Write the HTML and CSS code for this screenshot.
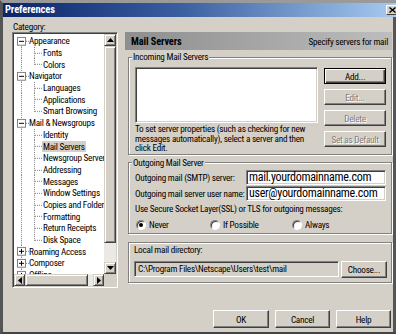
FILE: index.html
```html
<!DOCTYPE html>
<html>
<head>
<meta charset="utf-8">
<title>Preferences</title>
<link rel="stylesheet" href="styles.css">
</head>
<body>
<svg class="defs" width="0" height="0" aria-hidden="true">
  <defs>
    <symbol id="t-first" viewBox="0 0 15 12" preserveAspectRatio="none">
      <path d="M7.5 11V12M12 6.5H15" stroke="#808080" stroke-dasharray="1 1" fill="none"/>
      <rect x="3.5" y="2.5" width="8" height="8" fill="#fff" stroke="#808080"/>
      <path d="M5 6.5H10" stroke="#000"/>
    </symbol>
    <symbol id="t-open" viewBox="0 0 15 12" preserveAspectRatio="none">
      <path d="M7.5 0V2M7.5 11V12M12 6.5H15" stroke="#808080" stroke-dasharray="1 1" fill="none"/>
      <rect x="3.5" y="2.5" width="8" height="8" fill="#fff" stroke="#808080"/>
      <path d="M5 6.5H10" stroke="#000"/>
    </symbol>
    <symbol id="t-closed" viewBox="0 0 15 12" preserveAspectRatio="none">
      <path d="M7.5 0V2M7.5 11V12M12 6.5H15" stroke="#808080" stroke-dasharray="1 1" fill="none"/>
      <rect x="3.5" y="2.5" width="8" height="8" fill="#fff" stroke="#808080"/>
      <path d="M5 6.5H10M7.5 4V9" stroke="#000"/>
    </symbol>
    <symbol id="child" viewBox="0 0 29 12" preserveAspectRatio="none">
      <path d="M7.5 0V12M20.5 0V12M21 6.5H28" stroke="#808080" stroke-dasharray="1 1" fill="none"/>
    </symbol>
    <symbol id="child-last" viewBox="0 0 29 12" preserveAspectRatio="none">
      <path d="M7.5 0V12M20.5 0V7M21 6.5H28" stroke="#808080" stroke-dasharray="1 1" fill="none"/>
    </symbol>
  </defs>
</svg>

<div class="window">
  <div class="titlebar">
    <span class="title">Preferences</span>
    <span class="close"><svg width="7" height="6" viewBox="0 0 7 6"><path d="M0.5 0.5L6.5 5.5M6.5 0.5L0.5 5.5" stroke="#000" stroke-width="1.4"/></svg></span>
  </div>

  <div class="content">
    <div class="main">
      <div class="left">
        <div class="cat-label">Category:</div>
        <div class="tree">
          <div class="tree-rows">
            <div class="row top"><svg class="g"><use href="#t-first"/></svg><span>Appearance</span></div>
            <div class="row child"><svg class="g"><use href="#child"/></svg><span>Fonts</span></div>
            <div class="row child"><svg class="g"><use href="#child-last"/></svg><span>Colors</span></div>
            <div class="row top"><svg class="g"><use href="#t-open"/></svg><span>Navigator</span></div>
            <div class="row child"><svg class="g"><use href="#child"/></svg><span>Languages</span></div>
            <div class="row child"><svg class="g"><use href="#child"/></svg><span>Applications</span></div>
            <div class="row child"><svg class="g"><use href="#child-last"/></svg><span>Smart Browsing</span></div>
            <div class="row top"><svg class="g"><use href="#t-open"/></svg><span>Mail &amp; Newsgroups</span></div>
            <div class="row child"><svg class="g"><use href="#child"/></svg><span>Identity</span></div>
            <div class="row child"><svg class="g"><use href="#child"/></svg><span class="sel">Mail Servers</span></div>
            <div class="row child"><svg class="g"><use href="#child"/></svg><span>Newsgroup Servers</span></div>
            <div class="row child"><svg class="g"><use href="#child"/></svg><span>Addressing</span></div>
            <div class="row child"><svg class="g"><use href="#child"/></svg><span>Messages</span></div>
            <div class="row child"><svg class="g"><use href="#child"/></svg><span>Window Settings</span></div>
            <div class="row child"><svg class="g"><use href="#child"/></svg><span>Copies and Folders</span></div>
            <div class="row child"><svg class="g"><use href="#child"/></svg><span>Formatting</span></div>
            <div class="row child"><svg class="g"><use href="#child"/></svg><span>Return Receipts</span></div>
            <div class="row child"><svg class="g"><use href="#child-last"/></svg><span>Disk Space</span></div>
            <div class="row top"><svg class="g"><use href="#t-closed"/></svg><span>Roaming Access</span></div>
            <div class="row top"><svg class="g"><use href="#t-closed"/></svg><span>Composer</span></div>
            <div class="row top"><svg class="g"><use href="#t-closed"/></svg><span>Offline</span></div>
          </div>
          <div class="vscroll">
            <div class="sb sb-btn"><svg width="7" height="4" viewBox="0 0 7 4"><path d="M3.5 0L7 4H0Z"/></svg></div>
            <div class="sb vthumb"></div>
            <div class="track"></div>
            <div class="sb sb-btn"><svg width="7" height="4" viewBox="0 0 7 4"><path d="M0 0H7L3.5 4Z"/></svg></div>
          </div>
          <div class="hscroll">
            <div class="sb sb-btn"><svg width="4" height="7" viewBox="0 0 4 7"><path d="M0 3.5L4 0V7Z"/></svg></div>
            <div class="sb hthumb"></div>
            <div class="track"></div>
            <div class="sb sb-btn"><svg width="4" height="7" viewBox="0 0 4 7"><path d="M0 0L4 3.5L0 7Z"/></svg></div>
          </div>
          <div class="corner"></div>
        </div>
      </div>

      <div class="right">
        <div class="header"><b>Mail Servers</b><span>Specify servers for mail</span></div>

        <fieldset class="group incoming">
          <legend>Incoming Mail Servers</legend>
          <div class="incoming-grid">
            <div class="listbox"></div>
            <div class="btn-col">
              <button class="btn default">Add...</button>
              <button class="btn disabled">Edit...</button>
              <button class="btn disabled">Delete</button>
              <button class="btn disabled">Set as Default</button>
            </div>
            <p class="hint">To set server properties (such as checking for new<br>messages automatically), select a server and then<br>click Edit.</p>
          </div>
        </fieldset>

        <fieldset class="group outgoing">
          <legend>Outgoing Mail Server</legend>
          <div class="field-row">
            <span>Outgoing mail (SMTP) server:</span>
            <div class="input">mail.yourdomainname.com</div>
          </div>
          <div class="field-row second">
            <span>Outgoing mail server user name:</span>
            <div class="input">user@yourdomainname.com</div>
          </div>
          <div class="ssl">Use Secure Socket Layer(SSL) or TLS for outgoing messages:</div>
          <div class="radios">
            <span class="radio-item"><span class="radio checked"></span>Never</span>
            <span class="radio-item"><span class="radio"></span>If Possible</span>
            <span class="radio-item"><span class="radio"></span>Always</span>
          </div>
        </fieldset>

        <div class="group localdir">
          <div class="ld-label">Local mail directory:</div>
          <div class="ld-row">
            <div class="ld-input">C:\Program Files\Netscape\Users\test\mail</div>
            <button class="btn choose">Choose...</button>
          </div>
        </div>
      </div>
    </div>

    <div class="footer">
      <button class="btn fbtn ok">OK</button>
      <button class="btn fbtn">Cancel</button>
      <button class="btn fbtn">Help</button>
    </div>
  </div>
</div>
</body>
</html>
```

FILE: styles.css
```css
* { box-sizing: border-box; }
html, body { margin: 0; padding: 0; }
body {
  width: 396px;
  height: 334px;
  overflow: hidden;
  background: #d4d0c8;
  font-family: "Roboto Condensed", "Liberation Sans Narrow", "Liberation Sans", Arial, sans-serif;
  font-size: 9.2px;
  letter-spacing: -0.25px;
  color: #000;
}
.defs { position: absolute; width: 0; height: 0; overflow: hidden; }

.window {
  width: 396px;
  height: 334px;
  display: flex;
  flex-direction: column;
  background: #d4d0c8;
  border-top: 3px solid #9a9a9a;
  border-left: 3px solid #555;
  border-bottom: 2px solid #444;
}

.titlebar {
  flex: none;
  height: 14px;
  display: flex;
  align-items: center;
  justify-content: space-between;
  padding-left: 2px;
  overflow: hidden;
  background: linear-gradient(to right, #0a246a 0%, #3a5fa0 45%, #a6caf0 100%);
}
.title { color: #fff; font-weight: bold; font-size: 10.5px; letter-spacing: -0.1px; line-height: 14px; }
.close {
  flex: none;
  width: 13px;
  height: 10px;
  margin-right: -3px;
  display: flex;
  align-items: center;
  justify-content: center;
  background: #d4d0c8;
  border: 1px solid;
  border-color: #fff #404040 #404040 #fff;
}

.content {
  flex: 1;
  display: flex;
  flex-direction: column;
  border-right: 3px solid #555;
}
.main { flex: none; height: 271px; display: flex; gap: 7px; }

/* left column */
.left { width: 115px; padding: 4px 0 0 9px; }
.cat-label { height: 11px; line-height: 11px; padding-left: 1px; }
.tree {
  width: 106px;
  height: 256px;
  padding: 1px;
  border: 1px solid;
  border-color: #808080 #fff #fff #808080;
  box-shadow: inset 1px 1px #404040, inset -1px -1px #d4d0c8;
  background: #fff;
  display: grid;
  grid-template-columns: 90px 12px;
  grid-template-rows: 240px 12px;
}
.tree-rows { overflow: hidden; padding-top: 1px; }
.row { height: 11.7px; display: flex; align-items: center; white-space: nowrap; line-height: 11px; }
.row .g { flex: none; height: 100%; }
.row.top .g { width: 15px; }
.row.child .g { width: 29px; }
.sel { background: #d4d0c8; padding: 0 1px; margin-left: -1px; }

.sb {
  background: #d4d0c8;
  border: 1px solid;
  border-color: #d4d0c8 #404040 #404040 #d4d0c8;
  box-shadow: inset 1px 1px #fff, inset -1px -1px #808080;
}
.sb-btn { display: flex; align-items: center; justify-content: center; }
.track { background: #ebe9e4; }
.vscroll { display: flex; flex-direction: column; }
.vscroll .sb-btn { height: 12px; flex: none; }
.vthumb { height: 197px; flex: none; }
.vscroll .track { flex: 1; }
.hscroll { display: flex; }
.hscroll .sb-btn { width: 11px; flex: none; }
.hthumb { width: 63px; flex: none; }
.hscroll .track { flex: 1; }
.corner { background: #d4d0c8; }

/* right column */
.right { flex: 1; margin-top: 15px; margin-right: 1px; }
.header {
  height: 18px;
  display: flex;
  align-items: center;
  justify-content: space-between;
  padding: 0 4px 0 6px;
  background: linear-gradient(to right, #8e8e8e, #bdbdbd);
}
.header b { font-size: 10.3px; letter-spacing: -0.1px; }

.group {
  margin: 0 0 0 3px;
  min-width: 0;
  border: 1px solid #808080;
  box-shadow: inset 1px 1px #fff, 1px 1px #fff;
}
fieldset.group legend {
  margin-left: -3px;
  padding: 0 1px;
  line-height: 12px;
  background: #d4d0c8;
}

.incoming { margin-top: 1px; padding: 4px 5px 1px 6px; }
.incoming-grid {
  display: grid;
  grid-template-columns: 183px 62px;
  grid-template-rows: 56px auto;
  column-gap: 6px;
}
.listbox {
  grid-column: 1;
  grid-row: 1;
  background: #fff;
  border: 1px solid;
  border-color: #808080 #fff #fff #808080;
  box-shadow: inset 1px 1px #404040, inset -1px -1px #d4d0c8;
}
.btn-col {
  grid-column: 2;
  grid-row: 1 / span 2;
  display: flex;
  flex-direction: column;
  gap: 5px;
  margin-top: 1px;
}
.hint { grid-column: 1; grid-row: 2; margin: 1px 0 0; line-height: 9.6px; white-space: nowrap; }

.btn {
  font: inherit;
  letter-spacing: inherit;
  color: #000;
  padding: 0;
  margin: 0;
  height: 16px;
  background: #d4d0c8;
  border: 1px solid;
  border-color: #fff #404040 #404040 #fff;
  box-shadow: inset -1px -1px #808080;
  text-align: center;
  white-space: nowrap;
}
.btn.default {
  border-color: #000;
  box-shadow: inset 1px 1px #fff, inset -1px -1px #404040, inset -2px -2px #808080;
}
.btn.disabled { color: #808080; text-shadow: 1px 1px 0 #fff; }

.outgoing { margin-top: 2px; padding: 1px 5px 2px 6px; }
.field-row {
  display: grid;
  grid-template-columns: 111px 140px;
  align-items: center;
  height: 15px;
  white-space: nowrap;
}
.field-row.second { margin-top: 1px; }
.input {
  height: 15px;
  display: flex;
  align-items: center;
  padding-left: 2px;
  overflow: hidden;
  white-space: nowrap;
  font-size: 12px;
  letter-spacing: -0.3px;
  background: #fff;
  border: 1px solid;
  border-color: #808080 #fff #fff #808080;
  box-shadow: inset 1px 1px #404040, inset -1px -1px #d4d0c8;
}
.ssl { line-height: 12px; margin-top: 2px; white-space: nowrap; }
.radios {
  display: grid;
  grid-template-columns: 74px 82px auto;
  align-items: center;
  height: 12px;
  margin-top: 4px;
  padding-left: 1px;
}
.radio-item { display: flex; align-items: center; gap: 3px; white-space: nowrap; }
.radio {
  flex: none;
  width: 10px;
  height: 10px;
  border-radius: 50%;
  background: #fff;
  border: 1px solid;
  border-color: #808080 #fff #fff #808080;
  box-shadow: inset 1px 1px #404040;
  display: flex;
  align-items: center;
  justify-content: center;
}
.radio.checked::after {
  content: "";
  width: 4px;
  height: 4px;
  border-radius: 50%;
  background: #000;
}

.localdir { margin-top: 8px; padding: 2px 4px 5px 5px; }
.ld-label { line-height: 10px; }
.ld-row { display: flex; gap: 2px; margin-top: 6px; height: 16px; }
.ld-input {
  width: 205px;
  height: 16px;
  display: flex;
  align-items: center;
  padding-left: 3px;
  white-space: nowrap;
  overflow: hidden;
  background: #d4d0c8;
  border: 1px solid;
  border-color: #808080 #fff #fff #808080;
  box-shadow: inset 1px 1px #404040, inset -1px -1px #d4d0c8;
}
.choose { width: 46px; height: 17px; }

.footer {
  flex: none;
  display: flex;
  justify-content: flex-end;
  gap: 6px;
  padding: 22px 2px 4px 0;
}
.fbtn { width: 55px; height: 18px; }
.fbtn.ok { width: 56px; }
```
